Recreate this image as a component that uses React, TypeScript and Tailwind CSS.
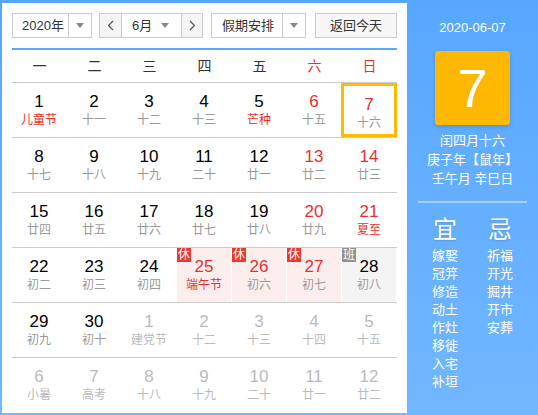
import React from "react";

type Day = {
  n: number;
  lunar: string;
  red?: boolean;
  festival?: boolean;
  muted?: boolean;
  today?: boolean;
  badge?: "休" | "班";
};

const weeks: Day[][] = [
  [
    { n: 1, lunar: "儿童节", festival: true },
    { n: 2, lunar: "十一" },
    { n: 3, lunar: "十二" },
    { n: 4, lunar: "十三" },
    { n: 5, lunar: "芒种", festival: true },
    { n: 6, lunar: "十五", red: true },
    { n: 7, lunar: "十六", red: true, today: true },
  ],
  [
    { n: 8, lunar: "十七" },
    { n: 9, lunar: "十八" },
    { n: 10, lunar: "十九" },
    { n: 11, lunar: "二十" },
    { n: 12, lunar: "廿一" },
    { n: 13, lunar: "廿二", red: true },
    { n: 14, lunar: "廿三", red: true },
  ],
  [
    { n: 15, lunar: "廿四" },
    { n: 16, lunar: "廿五" },
    { n: 17, lunar: "廿六" },
    { n: 18, lunar: "廿七" },
    { n: 19, lunar: "廿八" },
    { n: 20, lunar: "廿九", red: true },
    { n: 21, lunar: "夏至", red: true, festival: true },
  ],
  [
    { n: 22, lunar: "初二" },
    { n: 23, lunar: "初三" },
    { n: 24, lunar: "初四" },
    { n: 25, lunar: "端午节", red: true, festival: true, badge: "休" },
    { n: 26, lunar: "初六", red: true, badge: "休" },
    { n: 27, lunar: "初七", red: true, badge: "休" },
    { n: 28, lunar: "初八", badge: "班" },
  ],
  [
    { n: 29, lunar: "初九" },
    { n: 30, lunar: "初十" },
    { n: 1, lunar: "建党节", muted: true },
    { n: 2, lunar: "十二", muted: true },
    { n: 3, lunar: "十三", muted: true },
    { n: 4, lunar: "十四", muted: true },
    { n: 5, lunar: "十五", muted: true },
  ],
  [
    { n: 6, lunar: "小暑", muted: true },
    { n: 7, lunar: "高考", muted: true },
    { n: 8, lunar: "十八", muted: true },
    { n: 9, lunar: "十九", muted: true },
    { n: 10, lunar: "二十", muted: true },
    { n: 11, lunar: "廿一", muted: true },
    { n: 12, lunar: "廿二", muted: true },
  ],
];

const weekdays = ["一", "二", "三", "四", "五", "六", "日"];
const yi = ["嫁娶", "冠笄", "修造", "动土", "作灶", "移徙", "入宅", "补垣"];
const ji = ["祈福", "开光", "掘井", "开市", "安葬"];

const font = { fontFamily: '"Liberation Sans", "Noto Sans CJK SC", sans-serif' };

function Caret() {
  return (
    <span className="block w-0 h-0 border-l-[4px] border-r-[4px] border-t-[5px] border-l-transparent border-r-transparent border-t-[#888]" />
  );
}

function DayCell({ day }: { day: Day }) {
  const bg =
    day.badge === "休" ? "bg-[#fdeeee]" : day.badge === "班" ? "bg-[#f4f4f4]" : "";
  const numColor = day.muted
    ? "text-[#bbbbbb]"
    : day.red
    ? "text-[#e8302f]"
    : "text-black";
  const lunarColor = day.muted
    ? "text-[#bbbbbb]"
    : day.festival
    ? "text-[#e8302f]"
    : "text-[#999999]";
  return (
    <div className="relative h-[54px] pr-px">
      <div
        className={`relative h-full flex flex-col items-center pt-[9px] ${bg} ${
          day.today ? "border-[3px] border-[#ffbb00] pt-[6px] -ml-[1px] -mr-[1px]" : ""
        }`}
      >
        {day.badge && (
          <span
            className={`absolute left-0 top-0 w-[14px] h-[14px] flex items-center justify-center text-[12px] leading-none text-white ${
              day.badge === "休" ? "bg-[#e8382f]" : "bg-[#909090]"
            }`}
          >
            {day.badge}
          </span>
        )}
        <span className={`text-[17px] leading-[20px] ${numColor}`}>{day.n}</span>
        <span className={`text-[12px] leading-[17px] ${lunarColor}`}>{day.lunar}</span>
      </div>
    </div>
  );
}

export default function App() {
  return (
    <div
      className="w-[538px] h-[415px] flex bg-gradient-to-b from-[#57a7ff] to-[#72b7ff] pl-[2px] pt-[3px] pb-[2px] overflow-hidden"
      style={font}
    >
      <div className="w-[405px] h-full bg-white px-[10px] pt-[10px] flex flex-col">
        <div className="flex h-[25px] text-[13px] text-[#333]">
          <div className="w-[80px] flex border border-[#cccccc] bg-white">
            <span className="flex-1 flex items-center pl-[9px]">2020年</span>
            <span className="w-[23px] border-l border-[#cccccc] flex items-center justify-center">
              <Caret />
            </span>
          </div>
          <div className="ml-[7px] w-[104px] flex border border-[#cccccc] bg-white">
            <span className="w-[22px] bg-[#f5f5f5] border-r border-[#cccccc] flex items-center justify-center text-[#555]">
              <svg width="7" height="11" viewBox="0 0 7 11" fill="none" stroke="#555" strokeWidth="1.2">
                <path d="M6 1 L1.5 5.5 L6 10" />
              </svg>
            </span>
            <span className="flex-1 flex items-center pl-[10px]">6月</span>
            <span className="w-[12px] flex items-center">
              <Caret />
            </span>
            <span className="ml-[8px] w-[21px] bg-[#f5f5f5] border-l border-[#cccccc] flex items-center justify-center">
              <svg width="7" height="11" viewBox="0 0 7 11" fill="none" stroke="#555" strokeWidth="1.2">
                <path d="M1 1 L5.5 5.5 L1 10" />
              </svg>
            </span>
          </div>
          <div className="ml-[8px] w-[95px] flex border border-[#cccccc] bg-white">
            <span className="flex-1 flex items-center pl-[10px]">假期安排</span>
            <span className="w-[23px] border-l border-[#cccccc] flex items-center justify-center">
              <Caret />
            </span>
          </div>
          <div className="ml-[9px] w-[82px] border border-[#cccccc] bg-[#f7f7f7] flex items-center justify-center">
            返回今天
          </div>
        </div>

        <div className="mt-[10px] border-t-2 border-[#5aa8ff]" />
        <div className="grid grid-cols-7 h-[33px] border-b border-[#cccccc] text-[14px]">
          {weekdays.map((w, i) => (
            <div
              key={w}
              className={`flex items-center justify-center ${i >= 5 ? "text-[#e8302f]" : "text-[#333]"}`}
            >
              {w}
            </div>
          ))}
        </div>

        {weeks.map((week, wi) => (
          <div
            key={wi}
            className={`grid grid-cols-7 ${wi < weeks.length - 1 ? "border-b border-[#cccccc]" : ""}`}
          >
            {week.map((d, di) => (
              <DayCell key={di} day={d} />
            ))}
          </div>
        ))}
      </div>

      <div className="flex-1 flex flex-col items-center pt-[16px] text-white">
        <div className="text-[13px] leading-[18px]">2020-06-07</div>
        <div className="mt-[14px] w-[75px] h-[74px] rounded-[3px] bg-[#ffb800] shadow-[0_2px_4px_rgba(0,0,0,0.15)] flex items-center justify-center text-[54px] leading-none">
          7
        </div>
        <div className="mt-[6px] flex flex-col items-center text-[13px] leading-[19px]">
          <span>闰四月十六</span>
          <span>庚子年【鼠年】</span>
          <span>壬午月 辛巳日</span>
        </div>
        <div className="mt-[13px] w-[109px] h-[2px] bg-[#a6d0ff]" />
        <div className="mt-[12px] flex">
          <div className="w-[55px] flex flex-col items-center">
            <span className="text-[24px] leading-[30px] [text-shadow:0_1px_2px_rgba(0,0,0,0.15)]">宜</span>
            <div className="mt-[2px] flex flex-col items-center text-[13px] leading-[18px]">
              {yi.map((t) => (
                <span key={t}>{t}</span>
              ))}
            </div>
          </div>
          <div className="w-[55px] flex flex-col items-center">
            <span className="text-[24px] leading-[30px] [text-shadow:0_1px_2px_rgba(0,0,0,0.15)]">忌</span>
            <div className="mt-[2px] flex flex-col items-center text-[13px] leading-[18px]">
              {ji.map((t) => (
                <span key={t}>{t}</span>
              ))}
            </div>
          </div>
        </div>
      </div>
    </div>
  );
}
